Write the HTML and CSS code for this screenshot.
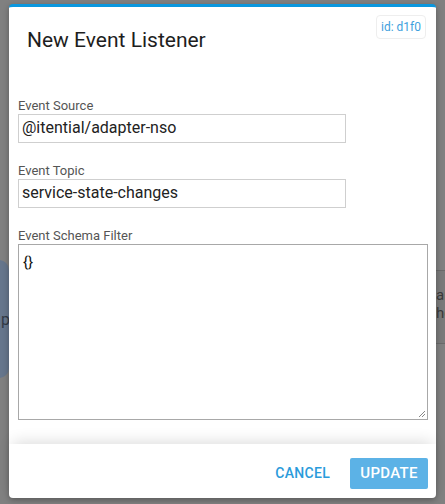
FILE: index.html
```html
<!DOCTYPE html>
<html>
<head>
<meta charset="utf-8">
<link rel="stylesheet" href="styles.css">
</head>
<body>
<div class="page">
  <div class="bg-row">
    <div class="bg-pill"><span>p</span></div>
    <div class="bg-card"><span>ar</span><span>he</span></div>
  </div>
</div>
<div class="overlay">
  <div class="modal">
    <div class="modal-header">
      <h2 class="title">New Event Listener</h2>
      <span class="id-badge">id: d1f0</span>
    </div>
    <div class="modal-body">
      <div class="field">
        <label class="label">Event Source</label>
        <div class="input">@itential/adapter-nso</div>
      </div>
      <div class="field">
        <label class="label">Event Topic</label>
        <div class="input">service-state-changes</div>
      </div>
      <div class="field">
        <label class="label">Event Schema Filter</label>
        <div class="textarea">{}
          <svg class="grip" width="9" height="9" viewBox="0 0 9 9"><path d="M8 2 L2 8 M8 5 L5 8" stroke="#888" stroke-width="1"/></svg>
        </div>
      </div>
    </div>
    <div class="modal-footer">
      <span class="btn-cancel">CANCEL</span>
      <span class="btn-update">UPDATE</span>
    </div>
  </div>
</div>
</body>
</html>
```
FILE: styles.css
```css
* { box-sizing: border-box; }
html, body { margin: 0; padding: 0; }
body {
  width: 445px;
  height: 504px;
  background: #808080;
  font-family: Roboto, "Liberation Sans", sans-serif;
  overflow: hidden;
  position: relative;
}
.page { padding-top: 260px; overflow: hidden; width: 445px; }
.bg-row { display: flex; justify-content: space-between; align-items: flex-start; }
.bg-pill {
  width: 40px;
  height: 118px;
  margin-left: -31px;
  background: #66768c;
  border-radius: 10px;
  color: #333b46;
  font-size: 16px;
  display: flex;
  align-items: center;
  justify-content: flex-end;
}
.bg-pill span { margin-right: -1px; }
.bg-card {
  margin-top: 10px;
  width: 40px;
  height: 74px;
  margin-right: -30px;
  border-top: 1px solid #6a6a6a;
  border-bottom: 1px solid #6a6a6a;
  border-left: 1px solid #6a6a6a;
  background: #7a7a7a;
  color: #3a3a3a;
  font-size: 15px;
  line-height: 18px;
  padding: 15px 0 0 0;
  display: flex;
  flex-direction: column;
  align-items: flex-start;
}
.overlay {
  position: absolute;
  left: 9px;
  top: 4px;
}
.modal {
  width: 427px;
  height: 494px;
  background: #fff;
  border-top: 3px solid #0a97de;
  border-radius: 4px;
  box-shadow: 0 2px 6px rgba(0,0,0,0.3);
  display: flex;
  flex-direction: column;
}
.modal-header {
  display: flex;
  justify-content: space-between;
  align-items: flex-start;
  padding: 8px 10px 0 18px;
  height: 91px;
}
.title {
  margin: 13px 0 0 0;
  font-size: 21px;
  font-weight: 400;
  color: #1e1e1e;
  line-height: 25px;
}
.id-badge {
  border: 1px solid #eeeeee;
  border-radius: 4px;
  font-size: 12px;
  color: #3f9fdd;
  padding: 4px 4px 4px 4px;
  line-height: 14px;
  height: 24px;
}
.modal-body {
  flex: 1;
  padding: 0 8px 0 9px;
  display: flex;
  flex-direction: column;
  gap: 20px;
}
.field { display: flex; flex-direction: column; }
.label {
  font-size: 13px;
  color: #555;
  line-height: 16px;
  height: 16px;
}
.input {
  width: 328px;
  height: 29px;
  border: 1px solid #cfcfcf;
  font-size: 16px;
  color: #222;
  padding: 3px 0 0 3px;
  line-height: 20px;
}
.textarea {
  position: relative;
  height: 176px;
  border: 1px solid #a8a8a8;
  font-size: 15px;
  color: #111;
  padding: 8px 0 0 4px;
  line-height: 18px;
}
.grip { position: absolute; right: 1px; bottom: 1px; }
.modal-footer {
  height: 54px;
  display: flex;
  justify-content: flex-end;
  align-items: center;
  gap: 20px;
  padding: 0 8px 0 0;
  box-shadow: 0 -6px 14px -4px rgba(0,0,0,0.14);
  border-radius: 0 0 4px 4px;
}
.btn-cancel {
  font-size: 14px;
  font-weight: 500;
  color: #2a9bdb;
  letter-spacing: 0.3px;
  margin-top: 4px;
}
.btn-update {
  width: 78px;
  height: 31px;
  margin-top: 4px;
  background: #5cb2e6;
  border-radius: 2px;
  color: #fff;
  font-size: 15px;
  font-weight: 500;
  display: flex;
  align-items: center;
  justify-content: center;
  letter-spacing: 0.3px;
}
```
